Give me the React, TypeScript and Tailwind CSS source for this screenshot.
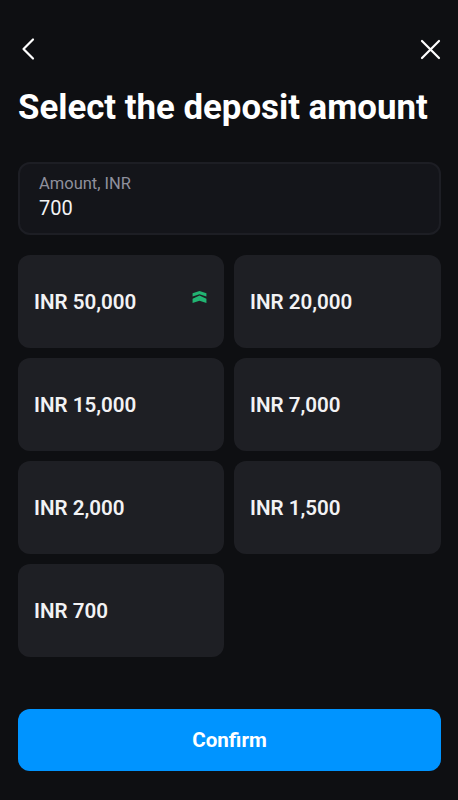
import React from "react";

const amounts = ["INR 50,000", "INR 20,000", "INR 15,000", "INR 7,000", "INR 2,000", "INR 1,500", "INR 700"];

export default function App() {
  return (
    <div className="w-[458px] h-[800px] bg-[#0e0f12] flex flex-col pl-[18px] pr-[17px] font-['Roboto',sans-serif] text-white overflow-hidden">
      {/* Top bar */}
      <div className="flex items-center justify-between h-[24px] mt-[37px]">
        <svg width="24" height="24" viewBox="0 0 24 24" fill="none" className="text-white">
          <path d="M15 2.5 L5.5 12 L15 21.5" stroke="currentColor" strokeWidth="2.2" strokeLinecap="round" strokeLinejoin="round" />
        </svg>
        <svg width="24" height="24" viewBox="0 0 24 24" fill="none" className="text-white">
          <path d="M5 4 L22 21 M22 4 L5 21" stroke="currentColor" strokeWidth="2.2" strokeLinecap="round" />
        </svg>
      </div>

      <h1 className="text-[34.8px] leading-[40px] font-bold mt-[26px] whitespace-nowrap">Select the deposit amount</h1>

      {/* Amount field */}
      <div className="mt-[35px] h-[73px] rounded-[12px] border-2 border-[#1d1e24] bg-[#14151a] pl-[19px] pt-[11px]">
        <div className="text-[16.5px] leading-[18px] text-[#8f909d]">Amount, INR</div>
        <div className="text-[20px] leading-[26px] text-[#f2f2f4] mt-[2px]">700</div>
      </div>

      {/* Preset amounts */}
      <div className="grid grid-cols-[206px_207px] gap-x-[10px] gap-y-[10.5px] mt-[20px]">
        {amounts.map((a, i) => (
          <div key={a} className="relative h-[92.5px] rounded-[12px] bg-[#1e1f24] flex items-center pl-[16px] pt-[2px]">
            <span className="text-[20.6px] font-semibold text-[#f2f2f4]">{a}</span>
            {i === 0 && (
              <svg width="15" height="12" viewBox="0 0 16 13" className="absolute top-[36px] right-[17px] text-[#22b573]">
                <path d="M0.5 2.5 L8 0 L15.5 2.5 V6 L8 3.5 L0.5 6 Z" fill="currentColor" />
                <path d="M0.5 8.5 L8 5 L15.5 8.5 V13 L8 10.5 L0.5 13 Z" fill="currentColor" />
              </svg>
            )}
          </div>
        ))}
      </div>

      <button type="button" className="mt-[52px] h-[62px] rounded-[12px] bg-[#0094ff] text-[20.6px] font-bold text-white pt-[2px]">
        Confirm
      </button>
    </div>
  );
}
